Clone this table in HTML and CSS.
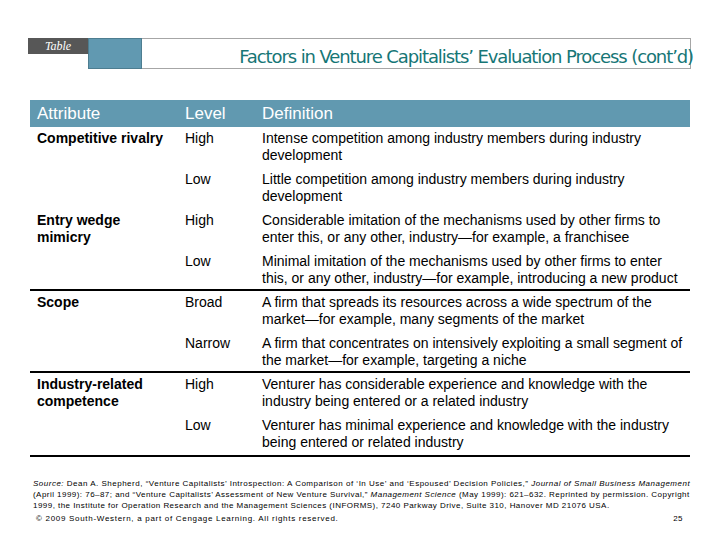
FILE: index.html
```html
<!DOCTYPE html>
<html>
<head>
<meta charset="utf-8">
<link rel="stylesheet" href="styles.css">
</head>
<body>
<div class="page">
  <div class="header">
    <div class="tab">Table</div>
    <div class="titlebox">
      <div class="swatch"></div>
      <div class="title">Factors in Venture Capitalists’ Evaluation Process (cont’d)</div>
    </div>
  </div>

  <div class="table">
    <div class="row head">
      <div class="c1">Attribute</div>
      <div class="c2">Level</div>
      <div class="c3">Definition</div>
    </div>
    <div class="row">
      <div class="c1 attr">Competitive rivalry</div>
      <div class="c2">High</div>
      <div class="c3">Intense competition among industry members during industry<br>development</div>
    </div>
    <div class="row">
      <div class="c1 attr"></div>
      <div class="c2">Low</div>
      <div class="c3">Little competition among industry members during industry<br>development</div>
    </div>
    <div class="row">
      <div class="c1 attr">Entry wedge<br>mimicry</div>
      <div class="c2">High</div>
      <div class="c3">Considerable imitation of the mechanisms used by other firms to<br>enter this, or any other, industry—for example, a franchisee</div>
    </div>
    <div class="row">
      <div class="c1 attr"></div>
      <div class="c2">Low</div>
      <div class="c3">Minimal imitation of the mechanisms used by other firms to enter<br>this, or any other, industry—for example, introducing a new product</div>
    </div>
    <div class="row group">
      <div class="c1 attr">Scope</div>
      <div class="c2">Broad</div>
      <div class="c3">A firm that spreads its resources across a wide spectrum of the<br>market—for example, many segments of the market</div>
    </div>
    <div class="row">
      <div class="c1 attr"></div>
      <div class="c2">Narrow</div>
      <div class="c3">A firm that concentrates on intensively exploiting a small segment of<br>the market—for example, targeting a niche</div>
    </div>
    <div class="row group">
      <div class="c1 attr">Industry-related<br>competence</div>
      <div class="c2">High</div>
      <div class="c3">Venturer has considerable experience and knowledge with the<br>industry being entered or a related industry</div>
    </div>
    <div class="row last">
      <div class="c1 attr"></div>
      <div class="c2">Low</div>
      <div class="c3">Venturer has minimal experience and knowledge with the industry<br>being entered or related industry</div>
    </div>
  </div>

  <div class="source">
    <div class="sline l1"><i>Source:</i> Dean A. Shepherd, “Venture Capitalists’ Introspection: A Comparison of ‘In Use’ and ‘Espoused’ Decision Policies,” <i>Journal of Small Business Management</i></div>
    <div class="sline">(April 1999): 76–87; and “Venture Capitalists’ Assessment of New Venture Survival,” <i>Management Science</i> (May 1999): 621–632. Reprinted by permission. Copyright</div>
    <div class="sline">1999, the Institute for Operation Research and the Management Sciences (INFORMS), 7240 Parkway Drive, Suite 310, Hanover MD 21076 USA.</div>
    <div class="footer">
      <span class="copy">© 2009 South-Western, a part of Cengage Learning. All rights reserved.</span>
      <span>25</span>
    </div>
  </div>
</div>
</body>
</html>
```

FILE: styles.css
```css
html, body {
  margin: 0;
  padding: 0;
  background: #fff;
}
.page {
  width: 720px;
  height: 540px;
  font-family: "Liberation Sans", Arial, sans-serif;
  color: #000;
  overflow: hidden;
}
.header {
  display: flex;
  margin: 38px 29px 0 28px;
  height: 31px;
}
.tab {
  width: 60px;
  height: 16px;
  background: #575757;
  color: #fff;
  font: italic 12px/16px "Liberation Serif", serif;
  text-align: center;
}
.titlebox {
  flex: 1;
  display: flex;
  border: 1px solid #a6a6a6;
  box-sizing: border-box;
}
.swatch {
  width: 52px;
  margin: -1px 0 -1px -1px;
  background: #6199b1;
  border: 1px solid #4d7d90;
}
.title {
  flex: 1;
  text-align: right;
  color: #167676;
  font: 18px/30px "DejaVu Sans", Verdana, sans-serif;
  letter-spacing: -1.1px;
  padding-top: 3px;
  margin-right: -3px;
  white-space: nowrap;
}
.table {
  margin: 31px 30px 0 30px;
  width: 660px;
}
.row {
  display: grid;
  grid-template-columns: 148px 77px 1fr;
  font-size: 14px;
  line-height: 17px;
  padding: 3px 0 4px;
}
.row > div {
  padding-left: 7px;
}
.head {
  background: #6199b0;
  color: #fff;
  font-size: 17px;
  line-height: 27px;
  padding: 0;
  height: 27px;
}
.attr {
  font-weight: bold;
}
.group {
  border-top: 2px solid #000;
  margin-top: -2px;
  padding-top: 3px;
}
.last {
  border-bottom: 2px solid #000;
}
.source {
  margin: 21px 30px 0 33px;
  font-size: 8px;
  line-height: 11px;
  letter-spacing: 0.46px;
}
.sline {
  white-space: nowrap;
}
.l1 {
  letter-spacing: 0.5px;
}
.footer {
  display: flex;
  justify-content: space-between;
  margin-top: 2px;
  padding: 0 7px 0 3px;
}
.copy {
  letter-spacing: 0.7px;
}
```
